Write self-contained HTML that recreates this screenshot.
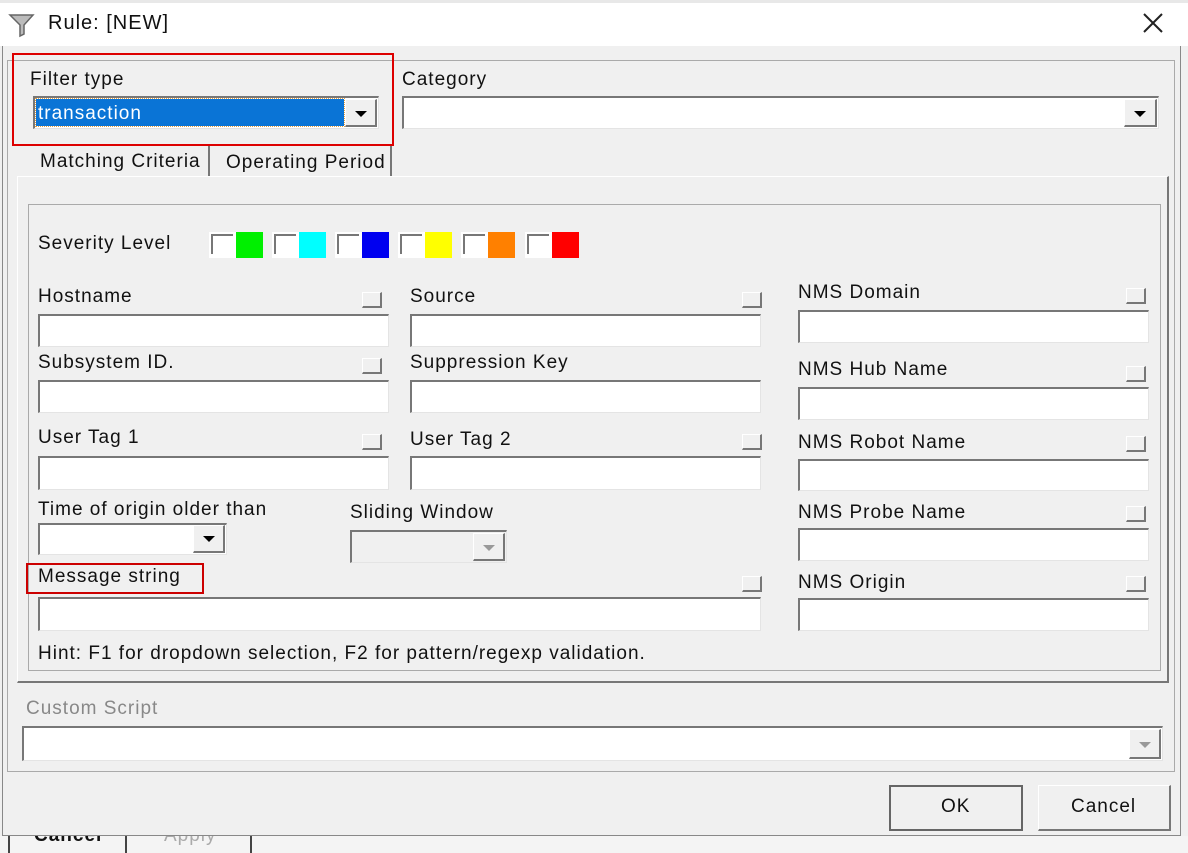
<!DOCTYPE html>
<html><head><style>
body{margin:0;width:1188px;height:853px;background:#f0f0f0;position:relative;overflow:hidden;font-family:"Liberation Sans",sans-serif;font-size:19px;color:#111;letter-spacing:1px}
.a{position:absolute}
.t{position:absolute;white-space:nowrap;line-height:22px}
.in{position:absolute;background:#fff;border-top:2px solid #777;border-left:2px solid #777;border-right:1px solid #e4e4e4;border-bottom:1px solid #e4e4e4;box-sizing:border-box}
.cb{position:absolute;width:20px;height:16px;background:#f0f0f0;border-right:2px solid #777;border-bottom:2px solid #777;border-top:1px solid #fff;border-left:1px solid #fff;box-sizing:border-box}
.btn{position:absolute;background:#f0f0f0;border-right:2px solid #777;border-bottom:2px solid #777;border-top:1px solid #fff;border-left:1px solid #fff;box-sizing:border-box}
.arr{position:absolute;width:0;height:0;border-left:6px solid transparent;border-right:6px solid transparent;border-top:6px solid #000}
.sw{position:absolute;width:54px;height:26px;top:232px}
.sw i{position:absolute;left:2px;top:2px;width:22px;height:20px;background:#fff;border-top:2px solid #777;border-left:2px solid #777;box-sizing:border-box}
</style></head><body>
<div class="a" style="left:0;top:0;width:1188px;height:46px;background:#fff"></div>
<div class="a" style="left:0;top:0;width:1188px;height:3px;background:#e8e8e8"></div>
<svg class="a" style="left:8px;top:12px" width="28" height="26" viewBox="0 0 28 26"><path d="M2 3 H25 L16 13 V22 L12 24 V13 Z" fill="#bbb" stroke="#666" stroke-width="1.5"/></svg>
<div class="t" style="left:48px;top:12px;font-size:20px">Rule: [NEW]</div>
<svg class="a" style="left:1142px;top:12px" width="22" height="22"><path d="M2 2 L20 20 M20 2 L2 20" stroke="#222" stroke-width="2"/></svg>
<div class="a" style="left:2px;top:46px;width:1px;height:790px;background:#888"></div>
<div class="a" style="left:1180px;top:46px;width:1px;height:790px;background:#888"></div>
<div class="a" style="left:2px;top:835px;width:1179px;height:1px;background:#888"></div>
<div class="a" style="left:0;top:836px;width:1188px;height:17px;background:#f4f4f4;overflow:hidden">
<div class="a" style="left:8px;top:0;width:2px;height:17px;background:#444"></div>
<div class="a" style="left:125px;top:0;width:2px;height:17px;background:#444"></div>
<div class="a" style="left:250px;top:0;width:2px;height:17px;background:#444"></div>
<div class="t" style="left:34px;top:-11px;font-weight:bold">Cancel</div>
<div class="t" style="left:164px;top:-11px;color:#aaa">Apply</div>
</div>
<div class="a" style="left:7px;top:60px;width:1168px;height:712px;border:1px solid #aaa;box-sizing:border-box"></div>

<div class="t" style="left:30px;top:69px">Filter type</div>
<div class="in" style="left:33px;top:96px;width:346px;height:33px"></div>
<div class="a" style="left:36px;top:99px;width:308px;height:27px;background:#0a74d6;outline:1px dotted #e8a040"></div>
<div class="t" style="left:38px;top:103px;color:#fff">transaction</div>
<div class="btn" style="left:345px;top:99px;width:32px;height:28px"></div><div class="arr" style="left:355px;top:111px"></div>
<div class="t" style="left:402px;top:69px">Category</div>
<div class="in" style="left:402px;top:96px;width:757px;height:33px"></div>
<div class="btn" style="left:1124px;top:99px;width:33px;height:28px"></div><div class="arr" style="left:1134px;top:111px"></div>
<div class="a" style="left:12px;top:53px;width:382px;height:93px;border:2px solid #d00;box-sizing:border-box"></div>

<div class="t" style="left:40px;top:151px">Matching Criteria</div>
<div class="a" style="left:208px;top:146px;width:2px;height:30px;background:#777"></div>
<div class="t" style="left:226px;top:152px">Operating Period</div>
<div class="a" style="left:390px;top:146px;width:2px;height:30px;background:#777"></div>
<div class="a" style="left:17px;top:176px;width:1152px;height:507px;border-top:1px solid #fff;border-left:1px solid #fff;border-right:2px solid #777;border-bottom:2px solid #777;box-sizing:border-box"></div>
<div class="a" style="left:28px;top:204px;width:1133px;height:467px;border:1px solid #aaa;box-sizing:border-box"></div>

<div class="t" style="left:38px;top:233px">Severity Level</div>
<div class="sw" style="left:209px;background:linear-gradient(90deg,#fff 50%,#00f000 50%)"><i></i></div>
<div class="sw" style="left:272px;background:linear-gradient(90deg,#fff 50%,#00ffff 50%)"><i></i></div>
<div class="sw" style="left:335px;background:linear-gradient(90deg,#fff 50%,#0000f0 50%)"><i></i></div>
<div class="sw" style="left:398px;background:linear-gradient(90deg,#fff 50%,#ffff00 50%)"><i></i></div>
<div class="sw" style="left:461px;background:linear-gradient(90deg,#fff 50%,#ff8000 50%)"><i></i></div>
<div class="sw" style="left:525px;background:linear-gradient(90deg,#fff 50%,#ff0000 50%)"><i></i></div>

<div class="t" style="left:38px;top:286px">Hostname</div><div class="cb" style="left:362px;top:292px"></div>
<div class="in" style="left:38px;top:314px;width:351px;height:33px"></div>
<div class="t" style="left:410px;top:286px">Source</div><div class="cb" style="left:742px;top:292px"></div>
<div class="in" style="left:410px;top:314px;width:351px;height:33px"></div>
<div class="t" style="left:38px;top:352px">Subsystem ID.</div><div class="cb" style="left:362px;top:358px"></div>
<div class="in" style="left:38px;top:380px;width:351px;height:33px"></div>
<div class="t" style="left:410px;top:352px">Suppression Key</div>
<div class="in" style="left:410px;top:380px;width:351px;height:33px"></div>
<div class="t" style="left:38px;top:427px">User Tag 1</div><div class="cb" style="left:362px;top:434px"></div>
<div class="in" style="left:38px;top:456px;width:351px;height:34px"></div>
<div class="t" style="left:410px;top:429px">User Tag 2</div><div class="cb" style="left:742px;top:434px"></div>
<div class="in" style="left:410px;top:456px;width:351px;height:34px"></div>
<div class="t" style="left:38px;top:499px">Time of origin older than</div>
<div class="in" style="left:38px;top:523px;width:189px;height:32px"></div>
<div class="btn" style="left:193px;top:525px;width:32px;height:28px"></div><div class="arr" style="left:203px;top:536px"></div>
<div class="t" style="left:350px;top:502px">Sliding Window</div>
<div class="in" style="left:350px;top:530px;width:157px;height:33px;background:#f0f0f0"></div>
<div class="btn" style="left:473px;top:533px;width:32px;height:28px"></div><div class="arr" style="left:483px;top:545px;border-top-color:#999"></div>
<div class="t" style="left:38px;top:566px">Message string</div>
<div class="a" style="left:26px;top:563px;width:178px;height:31px;border:2px solid #c00;box-sizing:border-box"></div>
<div class="cb" style="left:742px;top:576px"></div>
<div class="in" style="left:38px;top:597px;width:723px;height:34px"></div>
<div class="t" style="left:38px;top:643px">Hint: F1 for dropdown selection, F2 for pattern/regexp validation.</div>

<div class="t" style="left:798px;top:282px">NMS Domain</div><div class="cb" style="left:1126px;top:288px"></div>
<div class="in" style="left:798px;top:310px;width:351px;height:33px"></div>
<div class="t" style="left:798px;top:359px">NMS Hub Name</div><div class="cb" style="left:1126px;top:366px"></div>
<div class="in" style="left:798px;top:387px;width:351px;height:33px"></div>
<div class="t" style="left:798px;top:432px">NMS Robot Name</div><div class="cb" style="left:1126px;top:436px"></div>
<div class="in" style="left:798px;top:459px;width:351px;height:32px"></div>
<div class="t" style="left:798px;top:502px">NMS Probe Name</div><div class="cb" style="left:1126px;top:506px"></div>
<div class="in" style="left:798px;top:528px;width:351px;height:33px"></div>
<div class="t" style="left:798px;top:572px">NMS Origin</div><div class="cb" style="left:1126px;top:576px"></div>
<div class="in" style="left:798px;top:598px;width:351px;height:33px"></div>

<div class="t" style="left:26px;top:698px;color:#888">Custom Script</div>
<div class="in" style="left:22px;top:726px;width:1141px;height:35px"></div>
<div class="btn" style="left:1129px;top:729px;width:32px;height:30px"></div><div class="arr" style="left:1139px;top:742px;border-top-color:#999"></div>

<div class="btn" style="left:889px;top:785px;width:134px;height:46px;border:2px solid #666"></div>
<div class="t" style="left:941px;top:796px">OK</div>
<div class="btn" style="left:1038px;top:785px;width:133px;height:46px"></div>
<div class="t" style="left:1071px;top:796px">Cancel</div>
</body></html>
